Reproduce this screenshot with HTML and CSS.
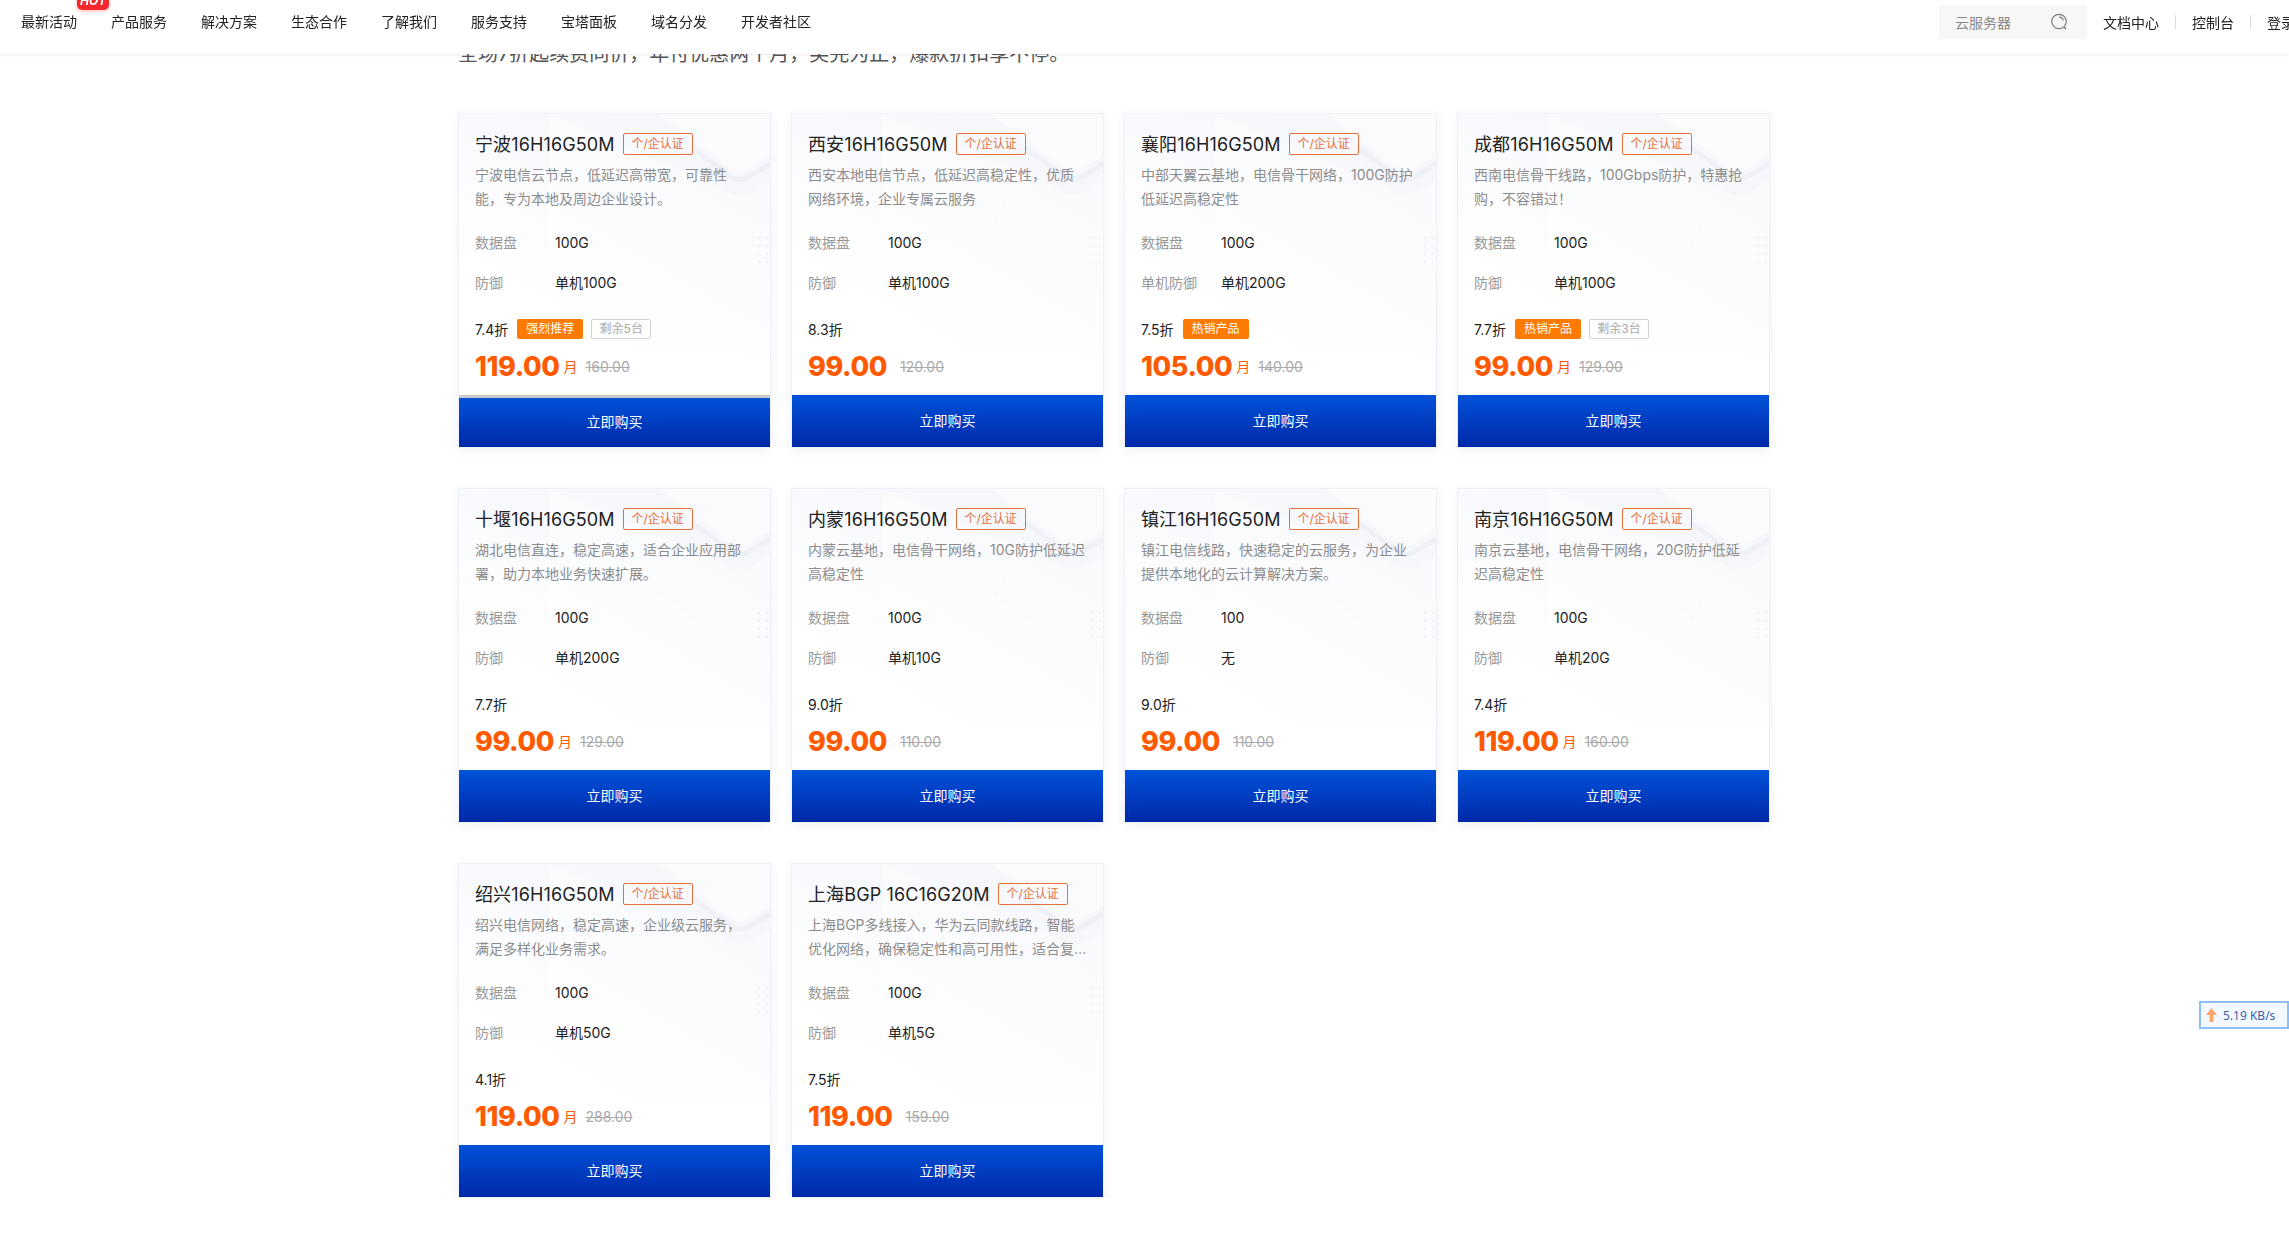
FILE: index.html
```html
<!DOCTYPE html>
<html lang="zh-CN">
<head>
    <meta charset="UTF-8">
    <title>云服务器特惠</title>
    <link rel="stylesheet" href="styles.css">
</head>
<body>
    <!-- shared card background art -->
    <svg class="defs" width="0" height="0">
        <defs>
            <linearGradient id="haze" x1="1" y1="0" x2="0.25" y2="1">
                <stop offset="0" stop-color="#f4f6fb"/>
                <stop offset="0.5" stop-color="#f9fafd"/>
                <stop offset="1" stop-color="#fff" stop-opacity="0"/>
            </linearGradient>
            <symbol id="deco" viewBox="0 0 311 240">
                <rect width="311" height="240" fill="url(#haze)"/>
                <path d="M90 0L262 74Q280 84 296 74L311 66V240H90Z" fill="#fff" opacity="0.35"/>
                <path d="M200 0L272 55Q280 61 290 55L311 42V0Z" fill="#fbfbfe"/>
                <path d="M232 33L273 63Q280 68 289 63L311 50" fill="none" stroke="#eff1f7" stroke-width="5"/>
                <path d="M240 48L274 74Q280 78 288 74L311 60" fill="none" stroke="#f6f7fb" stroke-width="11"/>
                <g fill="#edf0f6">
                    <circle cx="300" cy="124" r="1"/><circle cx="308" cy="124" r="1"/>
                    <circle cx="300" cy="132" r="1"/><circle cx="308" cy="132" r="1"/>
                    <circle cx="300" cy="140" r="1"/><circle cx="308" cy="140" r="1"/>
                    <circle cx="300" cy="148" r="1"/><circle cx="308" cy="148" r="1"/>
                    <circle cx="212" cy="92" r="0.7"/><circle cx="222" cy="100" r="0.7"/>
                    <circle cx="232" cy="108" r="0.7"/><circle cx="242" cy="116" r="0.7"/>
                    <circle cx="204" cy="104" r="0.7"/><circle cx="214" cy="112" r="0.7"/>
                    <circle cx="224" cy="120" r="0.7"/><circle cx="234" cy="128" r="0.7"/>
                </g>
            </symbol>
        </defs>
    </svg>

    <header class="topbar">
        <nav class="nav-left">
            <a class="nav-item">最新活动<span class="hot">HOT</span></a>
            <a class="nav-item">产品服务</a>
            <a class="nav-item">解决方案</a>
            <a class="nav-item">生态合作</a>
            <a class="nav-item">了解我们</a>
            <a class="nav-item">服务支持</a>
            <a class="nav-item">宝塔面板</a>
            <a class="nav-item">域名分发</a>
            <a class="nav-item">开发者社区</a>
        </nav>
        <div class="nav-right">
            <div class="search">
                <span>云服务器</span>
                <svg class="search-icon" width="18" height="18" viewBox="0 0 18 18" fill="none" stroke="#777" stroke-width="1.2">
                    <circle cx="9" cy="8.5" r="7.2"/>
                    <path d="M9 4.2c2.2 0 3.9 1.3 4.3 3.3"/>
                    <path d="M14 14l2 2"/>
                </svg>
            </div>
            <a class="nav-link">文档中心</a>
            <i class="sep"></i>
            <a class="nav-link">控制台</a>
            <i class="sep"></i>
            <a class="nav-link">登录</a>
        </div>
    </header>

    <main class="container">
        <p class="intro">全场7折起续费同价，年付优惠两个月，奖完为止，爆款折扣享不停。</p>
        <div class="grid">

            <div class="card">
                <svg class="card-deco"><use href="#deco"/></svg>
                <div class="card-body">
                    <div class="title-row"><h3>宁波16H16G50M</h3><span class="cert">个/企认证</span></div>
                    <p class="desc">宁波电信云节点，低延迟高带宽，可靠性能，专为本地及周边企业设计。</p>
                    <div class="spec"><span class="label">数据盘</span><span>100G</span></div>
                    <div class="spec"><span class="label">防御</span><span>单机100G</span></div>
                    <div class="discount">7.4折<span class="tag-hot">强烈推荐</span><span class="tag-left">剩余5台</span></div>
                    <div class="price"><b>119.00</b><span class="unit">月</span><s>160.00</s></div>
                </div>
                <a class="buy hover">立即购买</a>
            </div>

            <div class="card">
                <svg class="card-deco"><use href="#deco"/></svg>
                <div class="card-body">
                    <div class="title-row"><h3>西安16H16G50M</h3><span class="cert">个/企认证</span></div>
                    <p class="desc">西安本地电信节点，低延迟高稳定性，优质网络环境，企业专属云服务</p>
                    <div class="spec"><span class="label">数据盘</span><span>100G</span></div>
                    <div class="spec"><span class="label">防御</span><span>单机100G</span></div>
                    <div class="discount">8.3折</div>
                    <div class="price"><b>99.00</b><s>120.00</s></div>
                </div>
                <a class="buy">立即购买</a>
            </div>

            <div class="card">
                <svg class="card-deco"><use href="#deco"/></svg>
                <div class="card-body">
                    <div class="title-row"><h3>襄阳16H16G50M</h3><span class="cert">个/企认证</span></div>
                    <p class="desc">中部天翼云基地，电信骨干网络，100G防护低延迟高稳定性</p>
                    <div class="spec"><span class="label">数据盘</span><span>100G</span></div>
                    <div class="spec"><span class="label">单机防御</span><span>单机200G</span></div>
                    <div class="discount">7.5折<span class="tag-hot">热销产品</span></div>
                    <div class="price"><b>105.00</b><span class="unit">月</span><s>140.00</s></div>
                </div>
                <a class="buy">立即购买</a>
            </div>

            <div class="card">
                <svg class="card-deco"><use href="#deco"/></svg>
                <div class="card-body">
                    <div class="title-row"><h3>成都16H16G50M</h3><span class="cert">个/企认证</span></div>
                    <p class="desc">西南电信骨干线路，100Gbps防护，特惠抢购，不容错过！</p>
                    <div class="spec"><span class="label">数据盘</span><span>100G</span></div>
                    <div class="spec"><span class="label">防御</span><span>单机100G</span></div>
                    <div class="discount">7.7折<span class="tag-hot">热销产品</span><span class="tag-left">剩余3台</span></div>
                    <div class="price"><b>99.00</b><span class="unit">月</span><s>129.00</s></div>
                </div>
                <a class="buy">立即购买</a>
            </div>

            <div class="card">
                <svg class="card-deco"><use href="#deco"/></svg>
                <div class="card-body">
                    <div class="title-row"><h3>十堰16H16G50M</h3><span class="cert">个/企认证</span></div>
                    <p class="desc">湖北电信直连，稳定高速，适合企业应用部署，助力本地业务快速扩展。</p>
                    <div class="spec"><span class="label">数据盘</span><span>100G</span></div>
                    <div class="spec"><span class="label">防御</span><span>单机200G</span></div>
                    <div class="discount">7.7折</div>
                    <div class="price"><b>99.00</b><span class="unit">月</span><s>129.00</s></div>
                </div>
                <a class="buy">立即购买</a>
            </div>

            <div class="card">
                <svg class="card-deco"><use href="#deco"/></svg>
                <div class="card-body">
                    <div class="title-row"><h3>内蒙16H16G50M</h3><span class="cert">个/企认证</span></div>
                    <p class="desc">内蒙云基地，电信骨干网络，10G防护低延迟高稳定性</p>
                    <div class="spec"><span class="label">数据盘</span><span>100G</span></div>
                    <div class="spec"><span class="label">防御</span><span>单机10G</span></div>
                    <div class="discount">9.0折</div>
                    <div class="price"><b>99.00</b><s>110.00</s></div>
                </div>
                <a class="buy">立即购买</a>
            </div>

            <div class="card">
                <svg class="card-deco"><use href="#deco"/></svg>
                <div class="card-body">
                    <div class="title-row"><h3>镇江16H16G50M</h3><span class="cert">个/企认证</span></div>
                    <p class="desc">镇江电信线路，快速稳定的云服务，为企业提供本地化的云计算解决方案。</p>
                    <div class="spec"><span class="label">数据盘</span><span>100</span></div>
                    <div class="spec"><span class="label">防御</span><span>无</span></div>
                    <div class="discount">9.0折</div>
                    <div class="price"><b>99.00</b><s>110.00</s></div>
                </div>
                <a class="buy">立即购买</a>
            </div>

            <div class="card">
                <svg class="card-deco"><use href="#deco"/></svg>
                <div class="card-body">
                    <div class="title-row"><h3>南京16H16G50M</h3><span class="cert">个/企认证</span></div>
                    <p class="desc">南京云基地，电信骨干网络，20G防护低延迟高稳定性</p>
                    <div class="spec"><span class="label">数据盘</span><span>100G</span></div>
                    <div class="spec"><span class="label">防御</span><span>单机20G</span></div>
                    <div class="discount">7.4折</div>
                    <div class="price"><b>119.00</b><span class="unit">月</span><s>160.00</s></div>
                </div>
                <a class="buy">立即购买</a>
            </div>

            <div class="card">
                <svg class="card-deco"><use href="#deco"/></svg>
                <div class="card-body">
                    <div class="title-row"><h3>绍兴16H16G50M</h3><span class="cert">个/企认证</span></div>
                    <p class="desc">绍兴电信网络，稳定高速，企业级云服务，满足多样化业务需求。</p>
                    <div class="spec"><span class="label">数据盘</span><span>100G</span></div>
                    <div class="spec"><span class="label">防御</span><span>单机50G</span></div>
                    <div class="discount">4.1折</div>
                    <div class="price"><b>119.00</b><span class="unit">月</span><s>288.00</s></div>
                </div>
                <a class="buy">立即购买</a>
            </div>

            <div class="card">
                <svg class="card-deco"><use href="#deco"/></svg>
                <div class="card-body">
                    <div class="title-row"><h3>上海BGP 16C16G20M</h3><span class="cert">个/企认证</span></div>
                    <p class="desc">上海BGP多线接入，华为云同款线路，智能优化网络，确保稳定性和高可用性，适合复杂业务场景使用</p>
                    <div class="spec"><span class="label">数据盘</span><span>100G</span></div>
                    <div class="spec"><span class="label">防御</span><span>单机5G</span></div>
                    <div class="discount">7.5折</div>
                    <div class="price"><b>119.00</b><s>159.00</s></div>
                </div>
                <a class="buy">立即购买</a>
            </div>

        </div>
    </main>

    <div class="speed">
        <svg width="11" height="14" viewBox="0 0 11 14"><path d="M5.5 0l5.5 7H7.5v7h-4V7H0z" fill="#f9a66b"/></svg>
        <span>5.19 KB/s</span>
    </div>
</body>
</html>
```

FILE: styles.css
```css
* {
    box-sizing: border-box;
}
html, body {
    overflow-x: hidden;
}
body {
    margin: 0;
    background-color: #fff;
    color: #222;
    font-family: 'Inter', 'Noto Sans CJK SC', sans-serif;
    font-size: 14px;
}
a {
    color: inherit;
    text-decoration: none;
}
.defs {
    display: block;
}

/* top bar */
.topbar {
    position: fixed;
    top: 0;
    left: 0;
    right: 0;
    z-index: 10;
    height: 54px;
    padding-left: 21px;
    display: flex;
    align-items: flex-start;
    justify-content: space-between;
    background-color: #fff;
    box-shadow: 0 1px 3px rgba(0, 0, 0, 0.08);
}
.nav-left {
    display: flex;
    gap: 34px;
    padding-top: 11px;
}
.nav-item {
    position: relative;
    line-height: 22px;
    white-space: nowrap;
}
.hot {
    position: absolute;
    left: 56px;
    top: -17px;
    width: 32px;
    height: 16px;
    background-color: #f4282d;
    border-radius: 0 0 5px 5px;
    box-shadow: 0 1px 4px rgba(244, 40, 45, 0.35);
    color: #fff;
    font-size: 12px;
    font-weight: 700;
    font-style: italic;
    line-height: 14px;
    text-align: center;
}
.nav-right {
    display: flex;
    align-items: center;
    height: 34px;
    margin-top: 5px;
    margin-right: -6px;
    white-space: nowrap;
}
.search {
    width: 148px;
    height: 34px;
    margin-right: 16px;
    padding: 0 19px 0 16px;
    display: flex;
    align-items: center;
    justify-content: space-between;
    background-color: #f7f7f7;
    color: #888;
}
.sep {
    width: 1px;
    height: 14px;
    margin: 0 16px;
    background-color: #ddd;
}

/* page content */
.container {
    width: 1332px;
    margin-left: 458px;
    padding-top: 40px;
}
.intro {
    margin: 0 0 45px;
    font-size: 20px;
    line-height: 28px;
    color: #555;
}
.grid {
    display: grid;
    grid-template-columns: repeat(4, 313px);
    grid-auto-rows: 335px;
    column-gap: 20px;
    row-gap: 40px;
}

/* product card */
.card {
    position: relative;
    display: flex;
    flex-direction: column;
    border: 1px solid #eef1f7;
    background-color: #fff;
    box-shadow: 0 3px 10px rgba(40, 70, 130, 0.07);
}
.card-deco {
    position: absolute;
    top: 0;
    right: 0;
    width: 311px;
    height: 240px;
}
.card-body {
    position: relative;
    flex: 1;
    padding: 15px 16px 0;
}
.title-row {
    display: flex;
    align-items: center;
    gap: 8px;
    height: 30px;
}
h3 {
    margin: -3px 0 0;
    font-size: 18px;
    font-weight: 400;
    letter-spacing: 0.12px;
    white-space: nowrap;
}
.cert {
    width: 70px;
    height: 22px;
    border: 1px solid #e5703a;
    border-radius: 2px;
    color: #e5703a;
    font-size: 12px;
    line-height: 20px;
    text-align: center;
}
.desc {
    height: 48px;
    margin: 4px 0 0;
    color: #8c8c8c;
    line-height: 24px;
    display: -webkit-box;
    -webkit-line-clamp: 2;
    -webkit-box-orient: vertical;
    overflow: hidden;
}
.spec {
    display: flex;
    height: 40px;
    align-items: center;
}
.desc + .spec {
    margin-top: 11px;
}
.label {
    width: 80px;
    color: #999;
}
.discount {
    display: flex;
    align-items: center;
    height: 20px;
    margin-top: 17px;
}
.tag-hot {
    width: 66px;
    height: 20px;
    margin-left: 9px;
    background-color: #ff7a00;
    border-radius: 2px;
    color: #fff;
    font-size: 12px;
    line-height: 20px;
    text-align: center;
}
.tag-left {
    width: 60px;
    height: 20px;
    margin-left: 8px;
    border: 1px solid #ced3de;
    border-radius: 2px;
    color: #aaa;
    font-size: 12px;
    line-height: 18px;
    text-align: center;
}
.price {
    display: flex;
    align-items: center;
    height: 40px;
    margin-top: 7px;
    color: #ff5a00;
}
.price b {
    font-size: 27px;
    font-weight: 800;
    letter-spacing: -0.4px;
}
.unit {
    margin-left: 4px;
}
.price s {
    margin-left: 8px;
    color: #aaa;
    font-size: 14px;
}
.price b + s {
    margin-left: 13px;
}
.buy {
    position: relative;
    display: block;
    height: 52px;
    background: linear-gradient(#0052d9, #0028a8);
    color: #fff;
    line-height: 52px;
    text-align: center;
}
.buy.hover {
    border-top: 3px solid #c9c9c9;
    line-height: 47px;
}

/* network speed widget */
.speed {
    position: fixed;
    right: 0;
    top: 1001px;
    width: 90px;
    height: 28px;
    padding-left: 5px;
    display: flex;
    align-items: center;
    gap: 6px;
    border: 2px solid #8cc0f5;
    background-color: #f3f9ff;
    color: #3d5fa8;
    font-family: 'Noto Sans', sans-serif;
    font-size: 12px;
    white-space: nowrap;
}
```
